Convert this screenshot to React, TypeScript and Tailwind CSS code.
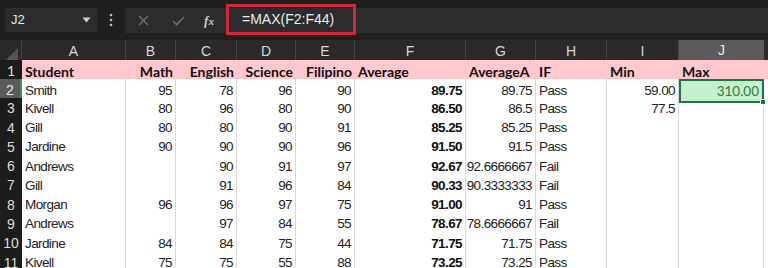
import React from 'react';

const cols = ['A', 'B', 'C', 'D', 'E', 'F', 'G', 'H', 'I', 'J'];

type Row = (string | number | null)[];

const header: Row = ['Student', 'Math', 'English', 'Science', 'Filipino', 'Average', 'AverageA', 'IF', 'Min', 'Max'];

const rows: Row[] = [
  ['Smith', 95, 78, 96, 90, '89.75', '89.75', 'Pass', '59.00', '310.00'],
  ['Kivell', 80, 96, 80, 90, '86.50', '86.5', 'Pass', '77.5', null],
  ['Gill', 80, 80, 90, 91, '85.25', '85.25', 'Pass', null, null],
  ['Jardine', 90, 90, 90, 96, '91.50', '91.5', 'Pass', null, null],
  ['Andrews', null, 90, 91, 97, '92.67', '92.6666667', 'Fail', null, null],
  ['Gill', null, 91, 96, 84, '90.33', '90.3333333', 'Fail', null, null],
  ['Morgan', 96, 96, 97, 75, '91.00', '91', 'Pass', null, null],
  ['Andrews', null, 97, 84, 55, '78.67', '78.6666667', 'Fail', null, null],
  ['Jardine', 84, 84, 75, 44, '71.75', '71.75', 'Pass', null, null],
  ['Kivell', 75, 75, 55, 88, '73.25', '73.25', 'Pass', null, null],
];

const gridCols = 'grid grid-cols-[22px_104px_50px_61px_59px_59px_111px_70px_71px_72px_85px_1fr]';

// header row 1: which columns are right aligned
const headerRight = [false, true, true, true, true, false, false, false, false, false];

function Toolbar() {
  return (
    <div className="h-[40px] bg-[#1f1f1f] flex items-start pt-[8px] relative">
      {/* name box */}
      <div className="ml-[5px] w-[92px] h-[24px] bg-[#2c2c2c] flex items-center justify-between pl-[6px] pr-[6px] text-[13px] text-[#e6e6e6]">
        <span>J2</span>
        <svg width="9" height="6" viewBox="0 0 9 6">
          <path d="M0.5 0.5 L8.5 0.5 L4.5 5.5 Z" fill="#cfcfcf" />
        </svg>
      </div>
      <div className="w-[28px] h-[24px] flex items-center justify-center">
        <svg width="4" height="14" viewBox="0 0 4 14">
          <circle cx="2" cy="2" r="1.3" fill="#bdbdbd" />
          <circle cx="2" cy="7" r="1.3" fill="#bdbdbd" />
          <circle cx="2" cy="12" r="1.3" fill="#bdbdbd" />
        </svg>
      </div>
      {/* formula bar */}
      <div className="flex-1 h-[25px] bg-[#2c2c2c] flex items-center">
        <div className="w-[36px] flex justify-center">
          <svg width="11" height="11" viewBox="0 0 11 11">
            <path d="M1 1 L10 10 M10 1 L1 10" stroke="#6f6f6f" strokeWidth="1.4" />
          </svg>
        </div>
        <div className="w-[34px] flex justify-center">
          <svg width="13" height="10" viewBox="0 0 13 10">
            <path d="M1 5 L4.5 8.5 L12 1" stroke="#6f6f6f" strokeWidth="1.6" fill="none" />
          </svg>
        </div>
        <div className="w-[28px] flex justify-center items-baseline text-[#d0d0d0] italic font-bold text-[13px] font-['Liberation_Serif',serif]">
          f<span className="text-[11px]">x</span>
        </div>
      </div>
      {/* red highlight around formula */}
      <div className="absolute left-[226px] top-[4px] w-[130px] h-[31px] border-[3px] border-[#d0283a] flex items-center pl-[13px] text-[14px] text-[#ededed]">
        =MAX(F2:F44)
      </div>
    </div>
  );
}

function ColumnHeaders() {
  return (
    <div className={`${gridCols} h-[20px] bg-[#2a2a2a] text-[#d8d8d8] text-[14px]`}>
      <div className="bg-[#2a2a2a] flex items-end justify-end pr-[3px] pb-[3px] border-r border-[#444]">
        <svg width="12" height="12" viewBox="0 0 12 12">
          <path d="M12 0 L12 12 L0 12 Z" fill="#555" />
        </svg>
      </div>
      {cols.map((c) =>
        c === 'J' ? (
          <div key={c} className="flex items-center justify-center bg-[#5b5b5b] border-b-2 border-[#3f8f5f] text-[#e8e8e8]">
            {c}
          </div>
        ) : (
          <div key={c} className="flex items-center justify-center border-r border-[#474747]">
            {c}
          </div>
        ),
      )}
      <div />
    </div>
  );
}

function RowHeader({ n }: { n: number }) {
  const active = n === 2;
  return (
    <div
      className={`flex items-center justify-center text-[14px] border-b border-[#3a3a3a] ${
        active ? 'bg-[#5a5a5a] text-[#e8e8e8] border-r-2 border-r-[#3f8f5f]' : 'bg-[#1c1c1c] text-[#dcdcdc]'
      }`}
    >
      {n}
    </div>
  );
}

function HeaderRow() {
  return (
    <div className={`${gridCols} h-[19px] font-['Lato','Liberation_Sans',sans-serif]`}>
      <RowHeader n={1} />
      {header.map((h, i) => (
        <div
          key={i}
          className={`bg-[#ffc7ce] flex items-center font-bold text-[14px] text-[#111] px-[3px] ${
            headerRight[i] ? 'justify-end' : 'justify-start'
          }`}
        >
          {h}
        </div>
      ))}
      <div className="bg-[#ffc7ce]" />
    </div>
  );
}

function DataRow({ row, n }: { row: Row; n: number }) {
  return (
    <div className={`${gridCols} h-[19.3px] font-['Liberation_Sans',Arial,sans-serif] text-[13.5px] text-[#222]`}>
      <RowHeader n={n} />
      {row.map((v, i) => {
        const left = i === 0 || i === 7;
        const bold = i === 5;
        const isMax = n === 2 && i === 9;
        if (isMax) {
          return (
            <div
              key={i}
              className="relative bg-[#c6efce] border-2 border-[#217346] flex items-center justify-end pr-[3px] text-[#2e7d32] font-['Lato','Liberation_Sans',sans-serif]"
            >
              {v}
              <span className="absolute -right-[4px] -bottom-[4px] w-[6px] h-[6px] bg-[#217346] border border-white" />
            </div>
          );
        }
        return (
          <div
            key={i}
            className={`bg-white border-r border-b border-[#d9d9d9] flex items-center px-[3px] whitespace-nowrap overflow-hidden tracking-[-0.6px] ${
              left ? 'justify-start' : 'justify-end'
            } ${bold ? 'font-bold text-[#111]' : ''}`}
          >
            {v ?? ''}
          </div>
        );
      })}
      <div className="bg-white" />
    </div>
  );
}

export default function App() {
  return (
    <div className="w-[768px] h-[268px] overflow-hidden bg-white font-['Liberation_Sans',Arial,sans-serif]">
      <Toolbar />
      <ColumnHeaders />
      <HeaderRow />
      {rows.map((r, i) => (
        <DataRow key={i} row={r} n={i + 2} />
      ))}
    </div>
  );
}
